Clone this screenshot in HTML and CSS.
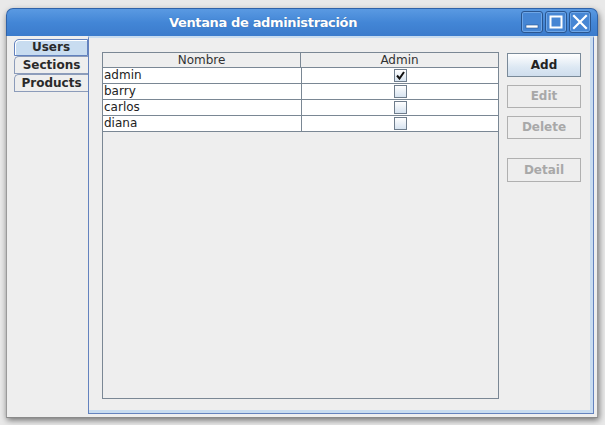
FILE: index.html
```html
<!DOCTYPE html>
<html>
<head>
<meta charset="utf-8">
<link rel="stylesheet" href="styles.css">
</head>
<body>
<div class="window">
  <div class="titlebar">
    <div class="title">Ventana de administración</div>
    <div class="wbtns">
      <div class="wbtn"><svg width="20" height="20" viewBox="0 0 20 20"><rect x="4" y="13" width="12" height="3" fill="#fff" stroke="#2a5690" stroke-width="0.6"/></svg></div>
      <div class="wbtn"><svg width="20" height="20" viewBox="0 0 20 20"><rect x="4.5" y="4.5" width="11" height="11" fill="none" stroke="#fff" stroke-width="2"/></svg></div>
      <div class="wbtn"><svg width="20" height="20" viewBox="0 0 20 20"><path d="M4 4 L16 16 M16 4 L4 16" stroke="#fff" stroke-width="2.2" stroke-linecap="square"/></svg></div>
    </div>
  </div>
  <div class="client">
    <div class="tabs">
      <div class="tab selected">Users</div>
      <div class="tab">Sections</div>
      <div class="tab">Products</div>
    </div>
    <div class="panel">
      <div class="scroll">
        <div class="row header">
          <div class="cell c1">Nombre</div>
          <div class="cell c2">Admin</div>
        </div>
        <div class="row">
          <div class="cell c1 left">admin</div>
          <div class="cell c2"><span class="cb checked"><svg width="9" height="9" viewBox="0 0 9 9"><path d="M1 4.5 L3.5 7.5 L8 1" stroke="#111" stroke-width="2" fill="none"/></svg></span></div>
        </div>
        <div class="row">
          <div class="cell c1 left">barry</div>
          <div class="cell c2"><span class="cb"></span></div>
        </div>
        <div class="row">
          <div class="cell c1 left">carlos</div>
          <div class="cell c2"><span class="cb"></span></div>
        </div>
        <div class="row">
          <div class="cell c1 left">diana</div>
          <div class="cell c2"><span class="cb"></span></div>
        </div>
      </div>
      <div class="buttons">
        <div class="btn primary">Add</div>
        <div class="btn disabled">Edit</div>
        <div class="btn disabled">Delete</div>
        <div class="btn disabled gap">Detail</div>
      </div>
    </div>
  </div>
</div>
</body>
</html>
```

FILE: styles.css
```css
html, body {
  margin: 0;
  padding: 0;
}
body {
  width: 605px;
  height: 425px;
  background: #e9e9e9;
  font-family: "DejaVu Sans", sans-serif;
  overflow: hidden;
}
.window {
  margin: 8px 0 0 6px;
  width: 592px;
  height: 409px;
  display: flex;
  flex-direction: column;
  border-radius: 7px 7px 0 0;
  box-shadow: 1px 3px 6px rgba(0,0,0,0.55);
  background: #eeeeee;
}
.titlebar {
  height: 27px;
  flex: none;
  background: linear-gradient(#5a9ae2, #4386d6 50%, #3b7bcc);
  border: 1px solid #2f62a8;
  border-bottom: none;
  border-radius: 7px 7px 0 0;
  display: flex;
  align-items: center;
  position: relative;
}
.title {
  flex: 1;
  text-align: center;
  color: #ffffff;
  font-weight: bold;
  font-size: 13px;
  letter-spacing: -0.35px;
  padding-right: 90px;
  padding-left: 12px;
  text-shadow: 0 0 1px rgba(0,0,0,0.25);
}
.wbtns {
  position: absolute;
  right: 6px;
  top: 2px;
  display: flex;
  gap: 2px;
}
.wbtn {
  width: 20px;
  height: 20px;
  border: 1px solid #2a5690;
  border-radius: 3px;
  box-shadow: inset 0 0 0 1px #6fa6e6;
  background: #4686d4;
  display: flex;
}
.client {
  flex: 1;
  display: flex;
  padding: 0 4px 3px 7px;
  border-left: 1px solid #9a9a9a;
  border-right: 1px solid #9a9a9a;
  border-bottom: 1px solid #8a8a8a;
}
.tabs {
  width: 74px;
  flex: none;
  display: flex;
  flex-direction: column;
  padding-top: 3px;
}
.tab {
  height: 16px;
  line-height: 16px;
  font-size: 12px;
  font-weight: bold;
  color: #2a2a2a;
  text-align: center;
  border: 1px solid #8c9cba;
  border-right: none;
  border-top-left-radius: 5px;
  background: #eeeeee;
}
.tab:first-child {
  height: 15px;
  line-height: 15px;
}
.tab.selected {
  background: #c8dcf0;
  border: 1px solid #6382be;
  box-shadow: inset 1px 1px 0 #ffffff;
  position: relative;
  z-index: 1;
}
.panel {
  flex: 1;
  display: flex;
  align-items: flex-start;
  border-left: 1px solid #6382be;
  border-right: 1px solid #6382be;
  border-bottom: 1px solid #6382be;
  border-top: 2px solid #c8dcf0;
  box-shadow: inset -3px -3px 0 #c8dcf0;
  padding: 14px 12px 0 13px;
  height: 378px;
  box-sizing: border-box;
}
.scroll {
  width: 397px;
  height: 347px;
  box-sizing: border-box;
  border: 1px solid #7a8794;
  background: #eeeeee;
  flex: none;
}
.row {
  display: flex;
  height: 16px;
  border-bottom: 1px solid #7a8794;
  background: #ffffff;
  box-sizing: border-box;
}
.row.header {
  background: #eeeeee;
  height: 15px;
}
.cell {
  font-size: 12px;
  line-height: 15px;
  color: #222;
  text-align: center;
  display: flex;
  align-items: center;
  justify-content: center;
}
.cell.left {
  justify-content: flex-start;
  padding-left: 1px;
}
.c1 {
  width: 197px;
  border-right: 1px solid #7a8794;
}
.c2 { flex: 1; }
.header .cell { color: #333; }
.cb {
  width: 11px;
  height: 11px;
  border: 1px solid #6f7d8c;
  background: linear-gradient(#ffffff, #d7e3f0);
  display: flex;
  align-items: center;
  justify-content: center;
}
.buttons {
  display: flex;
  flex-direction: column;
  margin-left: 8px;
  margin-top: 1px;
  width: 74px;
  gap: 8px;
}
.btn {
  height: 23px;
  box-sizing: border-box;
  border: 1px solid #b0b0b0;
  font-size: 12px;
  font-weight: bold;
  line-height: 21px;
  text-align: center;
  color: #a8a8a8;
  background: #eeeeee;
}
.btn.primary {
  height: 24px;
  line-height: 22px;
  color: #222;
  border: 1px solid #7a8a99;
  background: linear-gradient(#ffffff, #dde8f3 60%, #cfdeee);
}
.btn.gap {
  margin-top: 11px;
  height: 24px;
  line-height: 22px;
}
```
